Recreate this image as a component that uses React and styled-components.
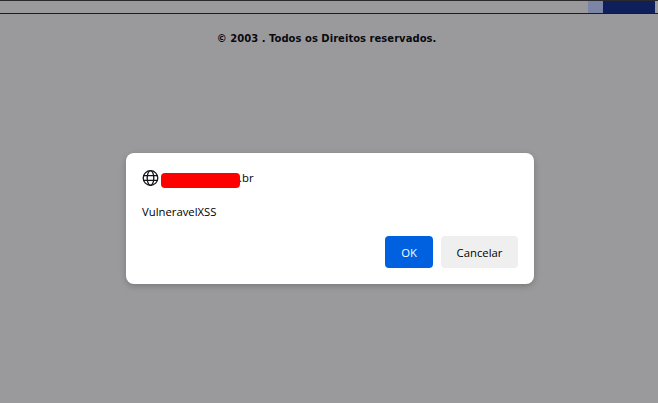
import React from 'react';
import styled, { createGlobalStyle } from 'styled-components';

const Global = createGlobalStyle`
  html, body { margin: 0; padding: 0; background: #9a9a9c; overflow: hidden; }
  #root { width: 658px; height: 403px; }
`;

const Page = styled.div`
  position: relative;
  width: 658px;
  height: 403px;
  background: #9a9a9c;
  display: flex;
  flex-direction: column;
`;

const TopBar = styled.div`
  height: 12px;
  border-top: 1px solid #2a2a2c;
  border-bottom: 1px solid #0c1a4c;
  display: flex;
  justify-content: flex-end;
  box-sizing: content-box;
  flex: none;
`;

const BarSegment = styled.div`
  width: ${p => p.$w}px;
  background: ${p => p.$c};
`;

const Copyright = styled.p`
  margin: 18px 0 0;
  padding-right: 5px;
  text-align: center;
  font: bold 10px/14px "DejaVu Sans", Verdana, sans-serif;
  letter-spacing: 0.03px;
  color: #0a0a10;
`;

const Overlay = styled.div`
  position: absolute;
  inset: 0;
  display: flex;
  align-items: flex-start;
  justify-content: center;
  padding: 153px 0 0 2px;
`;

const Dialog = styled.div`
  width: 408px;
  height: 131px;
  box-sizing: border-box;
  padding: 16px;
  background: #fff;
  border-radius: 8px;
  box-shadow: 0 2px 6px rgba(0, 0, 0, 0.22);
  font: 11.3px/16px "Open Sans", "Noto Sans", sans-serif;
  color: #000;
  display: flex;
  flex-direction: column;
`;

const Origin = styled.div`
  display: flex;
  align-items: center;
  height: 18px;
`;

const Redaction = styled.span`
  width: 79px;
  height: 15px;
  margin: 4px 0 0 2px;
  background: #ff0000;
  border-radius: 4px;
`;

const Suffix = styled.span`
  margin-left: -1px;
`;

const Message = styled.div`
  margin-top: 17px;
`;

const Actions = styled.div`
  margin-top: auto;
  display: flex;
  justify-content: flex-end;
  gap: 8px;
`;

const Button = styled.button`
  height: 32px;
  width: ${p => p.$w}px;
  border: 0;
  padding: 2px 0 0;
  border-radius: 4px;
  font: inherit;
  background: ${p => (p.$primary ? '#0061e0' : '#efefef')};
  color: ${p => (p.$primary ? '#fbfbfe' : '#000')};
`;

const Globe = () => (
  <svg width="17" height="17" viewBox="0 0 17 17" fill="none" stroke="#15141a" strokeWidth="1.3">
    <circle cx="8.5" cy="8" r="7.3" />
    <ellipse cx="8.5" cy="8" rx="3.3" ry="7.3" />
    <path d="M1.6 5.6h13.8M1.6 10.4h13.8" />
  </svg>
);

export default function App() {
  return (
    <Page>
      <Global />
      <TopBar>
        <BarSegment $w={15} $c="#7b86a6" />
        <BarSegment $w={52} $c="#0f1f5c" />
        <BarSegment $w={3} $c="transparent" />
      </TopBar>
      <Copyright>© 2003 . Todos os Direitos reservados.</Copyright>
      <Overlay>
        <Dialog>
          <Origin>
            <Globe />
            <Redaction />
            <Suffix>.br</Suffix>
          </Origin>
          <Message>VulneravelXSS</Message>
          <Actions>
            <Button $primary $w={48}>OK</Button>
            <Button $w={77}>Cancelar</Button>
          </Actions>
        </Dialog>
      </Overlay>
    </Page>
  );
}
